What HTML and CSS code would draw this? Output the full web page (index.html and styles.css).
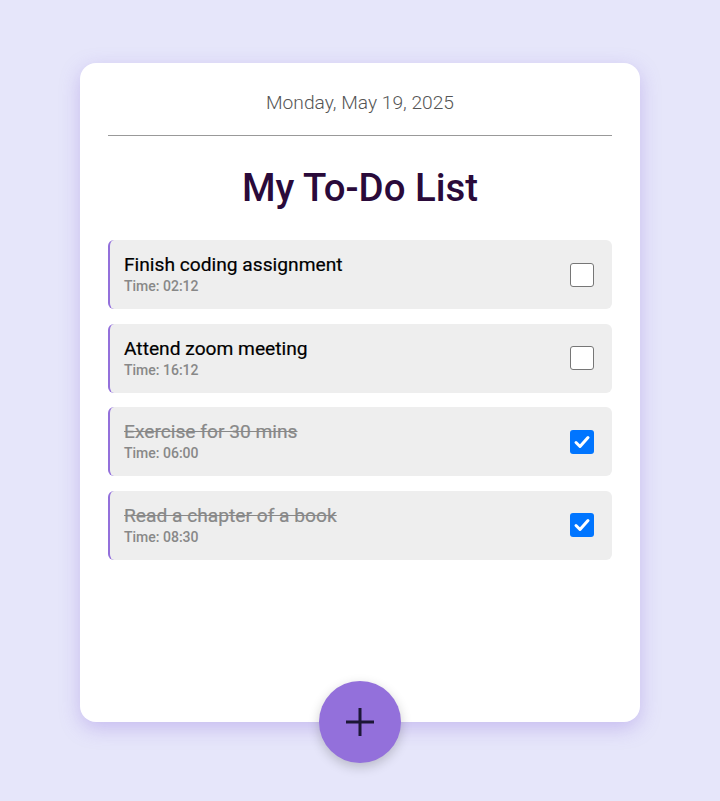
FILE: index.html
```html
<!DOCTYPE html>
<html lang="en">
<head>
<meta charset="utf-8">
<title>My To-Do List</title>
<link rel="stylesheet" href="styles.css">
</head>
<body>
<div class="card">
  <div class="date">Monday, May 19, 2025</div>
  <h1 class="title">My To-Do List</h1>
  <ul class="list">
    <li class="item">
      <div class="text"><div class="name">Finish coding assignment</div><div class="time">Time: 02:12</div></div>
      <span class="check"></span>
    </li>
    <li class="item">
      <div class="text"><div class="name">Attend zoom meeting</div><div class="time">Time: 16:12</div></div>
      <span class="check"></span>
    </li>
    <li class="item done">
      <div class="text"><div class="name">Exercise for 30 mins</div><div class="time">Time: 06:00</div></div>
      <span class="check on"><svg viewBox="0 0 24 24" width="24" height="24"><path d="M6 12.5l4 4 8-9" fill="none" stroke="#fff" stroke-width="3" stroke-linecap="round" stroke-linejoin="round"/></svg></span>
    </li>
    <li class="item done">
      <div class="text"><div class="name">Read a chapter of a book</div><div class="time">Time: 08:30</div></div>
      <span class="check on"><svg viewBox="0 0 24 24" width="24" height="24"><path d="M6 12.5l4 4 8-9" fill="none" stroke="#fff" stroke-width="3" stroke-linecap="round" stroke-linejoin="round"/></svg></span>
    </li>
  </ul>
  <button class="fab" aria-label="Add task"><svg viewBox="0 0 32 32" width="32" height="32"><path d="M16 2v28M2 16h28" stroke="#1c1737" stroke-width="3"/></svg></button>
</div>
</body>
</html>
```
FILE: styles.css
```css
* { box-sizing: border-box; }
html, body { margin: 0; padding: 0; }
html { background: #e6e6fa; }
body {
  background: #e6e6fa;
  font-family: Roboto, "Liberation Sans", sans-serif;
  padding: 63px 0 79px;
  min-height: 801px;
}
.card {
  position: relative;
  width: 560px;
  height: 659px;
  margin: 0 auto;
  background: #fff;
  border-radius: 16px;
  padding: 29px 28px 28px;
  box-shadow: 0 6px 20px rgba(140, 110, 220, 0.35);
}
.date {
  text-align: center;
  font-size: 19.2px;
  font-weight: 300;
  color: #555;
  line-height: 22px;
  padding-bottom: 21px;
  border-bottom: 1px solid #999;
}
.title {
  margin: 29px 0 30px;
  text-align: center;
  font-size: 38.4px;
  font-weight: 500;
  line-height: 45px;
  color: #2a0a3a;
}
.list {
  list-style: none;
  margin: 0;
  padding: 0;
  display: flex;
  flex-direction: column;
  gap: 14.5px;
}
.item {
  display: flex;
  align-items: center;
  justify-content: space-between;
  background: #eeeeee;
  border-left: 2px solid #9370db;
  border-radius: 6px;
  height: 69px;
  padding: 0 18px 0 14px;
}
.name {
  font-size: 19.2px;
  font-weight: 400;
  line-height: 22px;
  color: #000;
  -webkit-text-stroke: 0.2px #000;
}
.time {
  font-size: 14px;
  font-weight: 500;
  line-height: 17px;
  margin-top: 2px;
  color: #888;
}
.done .name {
  color: #888;
  -webkit-text-stroke: 0.2px #888;
  text-decoration: line-through;
}
.check {
  width: 24px;
  height: 24px;
  border: 1.5px solid #767676;
  border-radius: 3px;
  background: #fff;
  display: flex;
  align-items: center;
  justify-content: center;
}
.check.on {
  border: none;
  background: #0075ff;
}
.fab {
  position: absolute;
  left: 50%;
  bottom: -41px;
  transform: translateX(-50%);
  width: 82px;
  height: 82px;
  border-radius: 50%;
  border: none;
  background: #9370db;
  box-shadow: 0 4px 12px rgba(0, 0, 0, 0.2);
  display: flex;
  align-items: center;
  justify-content: center;
  padding: 0;
}
```
